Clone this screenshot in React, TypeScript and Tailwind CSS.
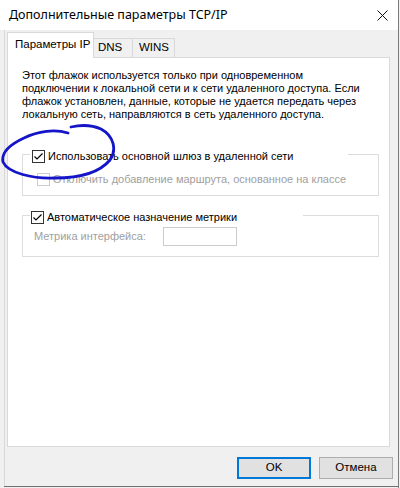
import React from "react";

function Check({ checked, disabled }: { checked?: boolean; disabled?: boolean }) {
  return (
    <div
      className={
        "w-[13px] h-[13px] shrink-0 border bg-white flex items-center justify-center " +
        (disabled ? "border-[#cccccc]" : "border-[#333333]")
      }
    >
      {checked && (
        <svg width="11" height="11" viewBox="0 0 11 11">
          <path d="M1.5 5.5 L4 8 L9.5 2.5" fill="none" stroke="#000" strokeWidth="1.2" />
        </svg>
      )}
    </div>
  );
}

export default function App() {
  return (
    <div
      className="relative w-[400px] h-[488px] overflow-hidden bg-[#f0f0f0] flex flex-row text-black"
      style={{ fontFamily: '"Liberation Sans", Arial, sans-serif' }}
    >
      <div className="w-[398px] flex flex-col">
        {/* Title bar */}
        <div className="h-[30px] bg-white flex items-center justify-between pl-[9px] pr-[10px]">
          <span className="text-[12.5px]" style={{ fontFamily: '"Noto Sans", "Liberation Sans", sans-serif' }}>
            Дополнительные параметры TCP/IP
          </span>
          <svg width="11" height="11" viewBox="0 0 11 11">
            <path d="M0.5 0.5 L10.5 10.5 M10.5 0.5 L0.5 10.5" stroke="#111" strokeWidth="1" />
          </svg>
        </div>

        {/* Body */}
        <div className="h-[456px] ml-[4px] border-l border-[#d8d8d8] pl-[2px] pt-[2px] flex flex-col">
          {/* Tabs */}
          <div className="h-[25px] flex items-end text-[11.5px]">
            <div className="relative z-10 h-[26px] -mb-[1px] w-[87px] bg-white border-l border-t border-r border-[#d9d9d9] flex items-center pl-[7px] pb-[2px]">
              Параметры IP
            </div>
            <div className="h-[19px] w-[39px] border-t border-r border-[#d9d9d9] flex items-center pl-[4px]">
              DNS
            </div>
            <div className="h-[19px] w-[42px] border-t border-r border-[#d9d9d9] flex items-center pl-[6px]">
              WINS
            </div>
          </div>

          {/* Panel */}
          <div className="w-[383px] h-[390px] bg-white border border-[#d9d9d9] flex flex-col text-[11px] leading-[13px]">
            <div className="ml-[14px] mt-[11px]">
              <div>Этот флажок используется только при одновременном</div>
              <div>подключении к локальной сети и к сети удаленного доступа. Если</div>
              <div>флажок установлен, данные, которые не удается передать через</div>
              <div>локальную сеть, направляются в сеть удаленного доступа.</div>
            </div>

            {/* Group 1 */}
            <div className="ml-[14px] mt-[33px] w-[357px] border border-[#dcdcdc] flex flex-col pb-[9px]">
              <div className="-mt-[5px] ml-[7px] w-[318px] h-[13px] bg-white flex items-center pl-[2px] gap-[3px]">
                <Check checked />
                <span>Использовать основной шлюз в удаленной сети</span>
              </div>
              <div className="mt-[10px] ml-[14px] h-[13px] flex items-center gap-[3px] text-[#a0a0a0]">
                <Check disabled />
                <span>Отключить добавление маршрута, основанное на классе</span>
              </div>
            </div>

            {/* Group 2 */}
            <div className="ml-[14px] mt-[19px] w-[357px] border border-[#dcdcdc] flex flex-col pb-[10px]">
              <div className="-mt-[5px] ml-[7px] w-[273px] h-[13px] bg-white flex items-center pl-[1px] gap-[3px]">
                <Check checked />
                <span>Автоматическое назначение метрики</span>
              </div>
              <div className="mt-[3px] ml-[11px] flex items-center">
                <span className="w-[129px] text-[#a0a0a0]">Метрика интерфейса:</span>
                <div className="w-[74px] h-[19px] border border-[#cccccc] bg-white" />
              </div>
            </div>
          </div>

          {/* Buttons */}
          <div className="mt-[10px] flex gap-[8px] pl-[230px] text-[11.5px]">
            <div className="w-[74px] h-[22px] bg-[#e1e1e1] border-2 border-[#0078d7] flex items-center justify-center">
              OK
            </div>
            <div className="w-[74px] h-[22px] bg-[#e1e1e1] border border-[#adadad] flex items-center justify-center">
              Отмена
            </div>
          </div>
        </div>
        <div className="h-[1px] ml-[4px] bg-[#6f6f6f]" />
      </div>
      <div className="w-[1px] bg-[#7a7a7a]" />

      {/* Hand-drawn annotation */}
      <svg
        className="absolute left-0 top-0 pointer-events-none"
        width="400"
        height="488"
        viewBox="0 0 400 488"
      >
        <path
          d="M68 133 C55 129, 38 131, 24 138 C9 145, 1 153, 3 162 C8 173, 33 179, 55 178 C80 178, 100 172, 110 160 C117 150, 114 136, 101 129 C92 125, 80 125, 71 127"
          fill="none"
          stroke="#1414c8"
          strokeWidth="2.8"
          strokeLinecap="round"
        />
      </svg>
    </div>
  );
}
